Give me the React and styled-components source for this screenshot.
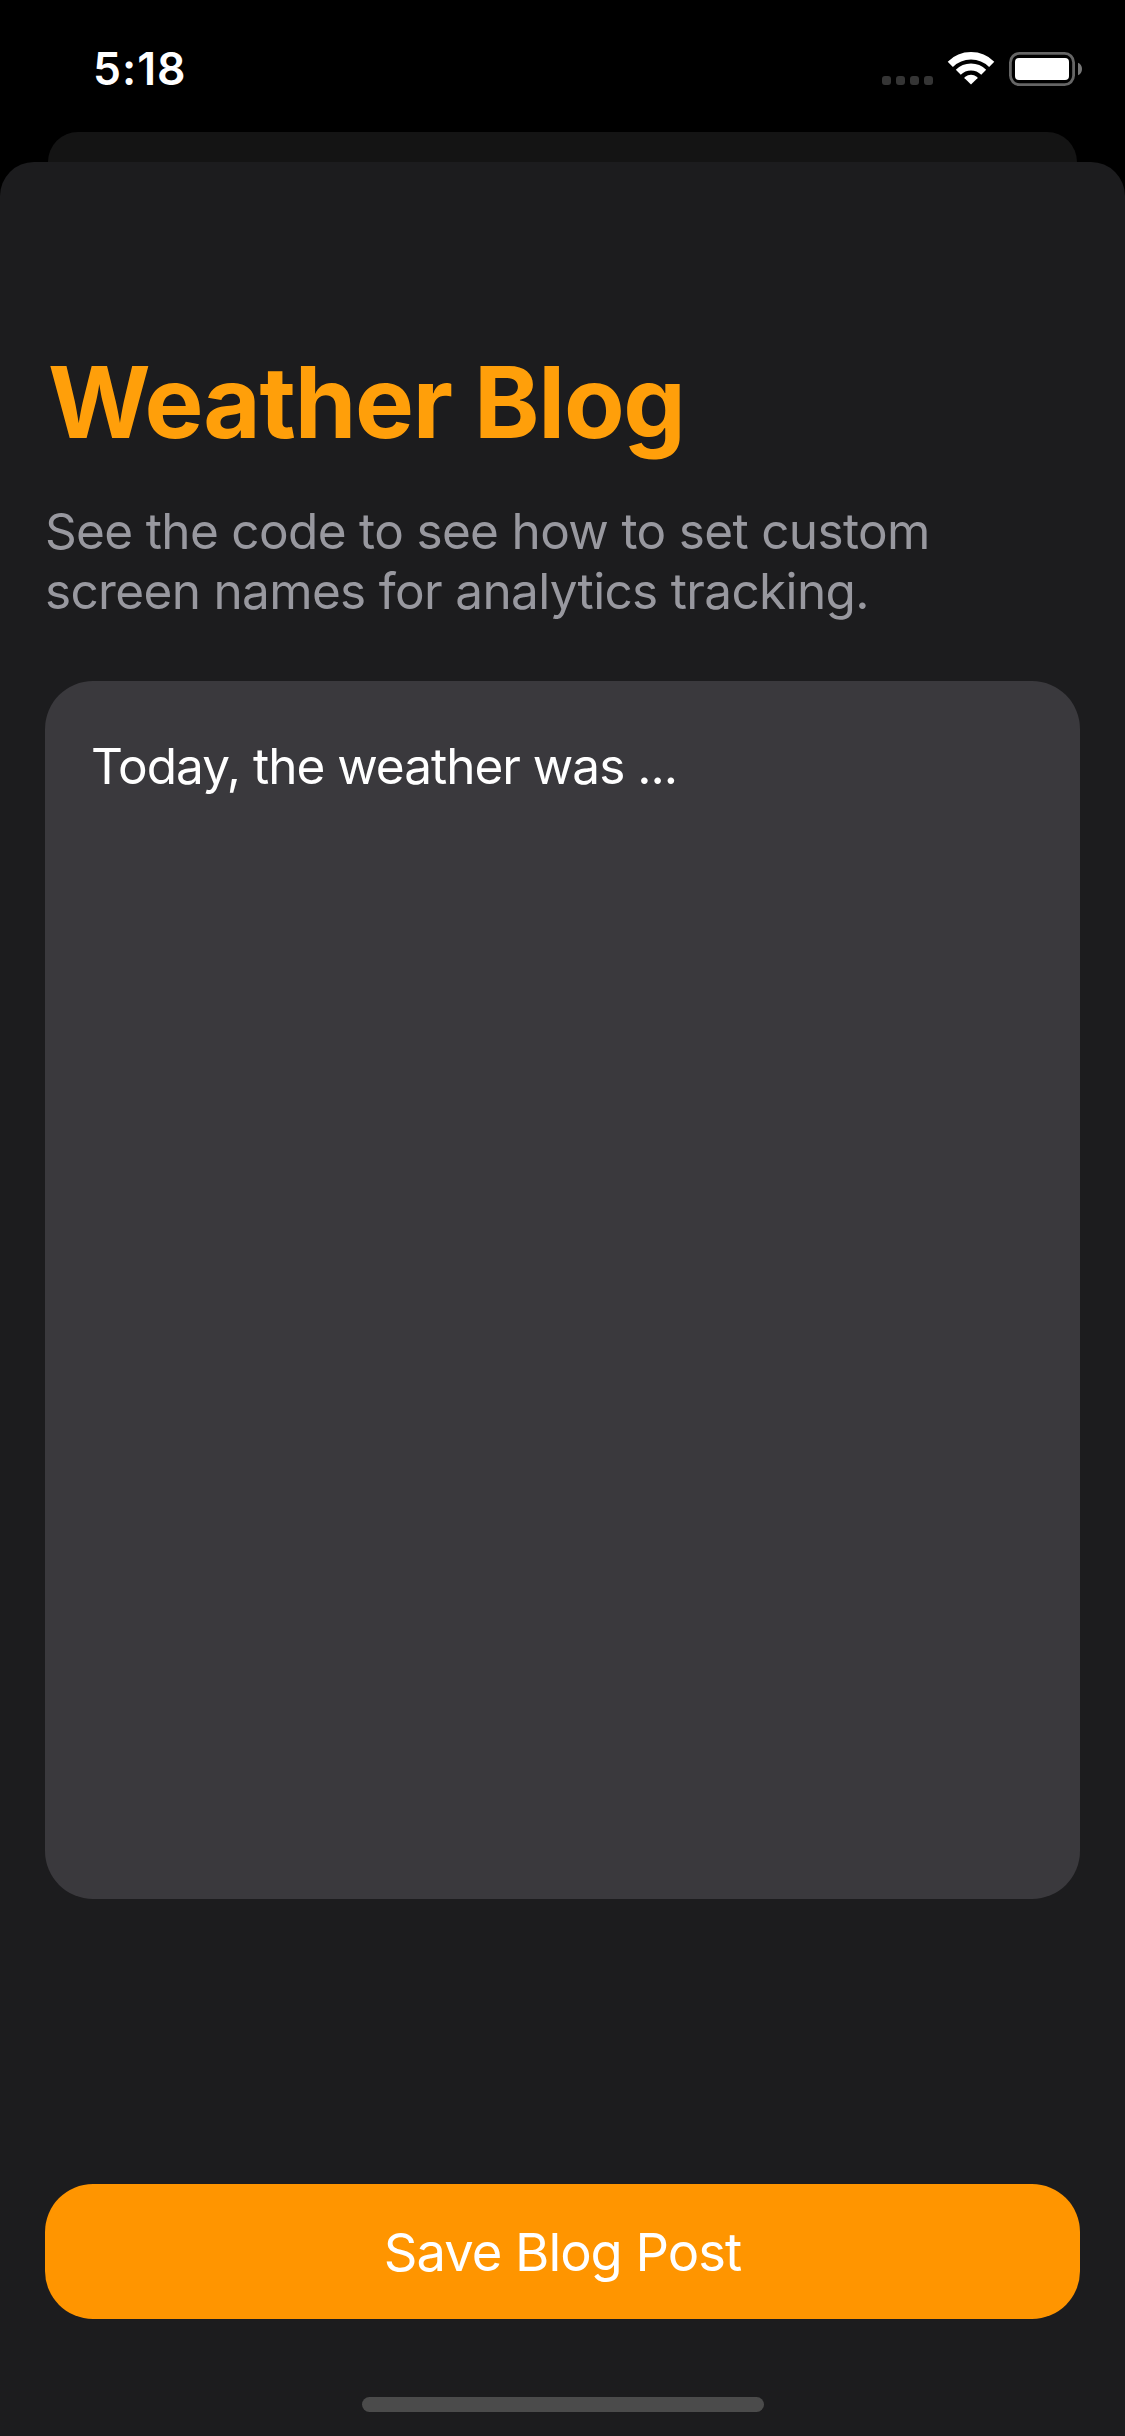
import React from "react";
import styled, { createGlobalStyle } from "styled-components";

const GlobalStyle = createGlobalStyle`
  *, *::before, *::after { box-sizing: border-box; }
  body {
    margin: 0;
    background: #000;
    font-family: Inter, "Liberation Sans", sans-serif;
  }
`;

const Screen = styled.div`
  display: flex;
  flex-direction: column;
  width: 1125px;
  height: 2436px;
  overflow: hidden;
  background: #000;
`;

const StatusBar = styled.header`
  display: flex;
  justify-content: space-between;
  align-items: flex-start;
  height: 132px;
  padding: 39px 43px 0 93px;
`;

const Time = styled.time`
  color: #fff;
  font-size: 44.5px;
  font-weight: 600;
  line-height: 60px;
  letter-spacing: 1px;
`;

const StatusIcons = styled.svg`
  display: block;
  width: 200px;
  height: 34px;
  margin-top: 13px;
`;

const SheetBehind = styled.div`
  height: 30px;
  margin: 0 48px;
  border-radius: 30px 30px 0 0;
  background: #141414;
`;

const Sheet = styled.main`
  display: flex;
  flex: 1;
  flex-direction: column;
  padding: 180px 45px 24px;
  border-radius: 34px 34px 0 0;
  background: #1c1c1e;
`;

const Title = styled.h1`
  margin: 0 0 39px 3px;
  color: #ff9f0a;
  font-size: 99px;
  font-weight: 700;
  line-height: 120px;
  letter-spacing: -1.25px;
  white-space: nowrap;
`;

const Subtitle = styled.p`
  margin: 0;
  color: #98989f;
  font-size: 49.5px;
  line-height: 60px;
  letter-spacing: -0.66px;
  white-space: nowrap;
`;

const Editor = styled.textarea`
  display: block;
  width: 100%;
  height: 1218px;
  margin: 60px 0 285px;
  padding: 55px 46px;
  border: 0;
  border-radius: 48px;
  outline: none;
  resize: none;
  background: #3a393d;
  color: #fff;
  font: 400 49.5px/60px Inter, "Liberation Sans", sans-serif;
  letter-spacing: -1px;
`;

const SaveButton = styled.button`
  height: 135px;
  padding: 0;
  border: 0;
  border-radius: 48px;
  background: #ff9500;
  color: #fff;
  font: 400 52.5px/64px Inter, "Liberation Sans", sans-serif;
  letter-spacing: -1px;
`;

const HomeIndicator = styled.div`
  align-self: center;
  width: 402px;
  height: 15px;
  margin-top: auto;
  border-radius: 7.5px;
  background: #4b4b4b;
`;

const DOTS = [0, 14, 28, 42];

function DeviceStatus() {
  return (
    <StatusIcons viewBox="882 52 200 34" aria-label="Device status">
      {DOTS.map((x) => (
        <rect key={x} x={882 + x} y="76" width="9" height="9" rx="3" fill="#353535" />
      ))}
      <g fill="none" stroke="#fff">
        <path d="M950.3 64.3A29.3 29.3 0 0 1 991.7 64.3" strokeWidth="7.3" />
        <path d="M958.3 72.3A18 18 0 0 1 983.7 72.3" strokeWidth="7" />
      </g>
      <path
        d="M971 84.6L964.6 78.3Q964.1 77.6 964.9 77A10.5 10.5 0 0 1 977.1 77Q977.9 77.6 977.4 78.3Z"
        fill="#fff"
      />
      <rect x="1010.4" y="53.4" width="63.2" height="31.2" rx="9" fill="none" stroke="#666" strokeWidth="2.8" />
      <rect x="1015" y="58" width="54" height="22" rx="4" fill="#fff" />
      <path d="M1078 62.7Q1082 64.4 1082 69Q1082 73.6 1078 75.3Z" fill="#777" />
    </StatusIcons>
  );
}

export default function App() {
  return (
    <>
      <GlobalStyle />
      <Screen>
        <StatusBar>
          <Time>5:18</Time>
          <DeviceStatus />
        </StatusBar>
        <SheetBehind />
        <Sheet>
          <Title>Weather Blog</Title>
          <Subtitle>
            See the code to see how to set custom
            <br />
            screen names for analytics tracking.
          </Subtitle>
          <Editor defaultValue="Today, the weather was ..." spellCheck={false} />
          <SaveButton type="button">Save Blog Post</SaveButton>
          <HomeIndicator />
        </Sheet>
      </Screen>
    </>
  );
}
